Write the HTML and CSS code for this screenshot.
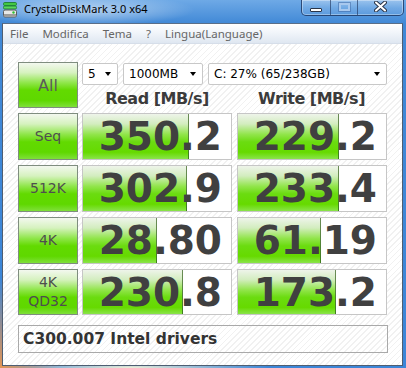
FILE: index.html
```html
<!DOCTYPE html>
<html>
<head>
<meta charset="utf-8">
<title>CrystalDiskMark 3.0 x64</title>
<link rel="stylesheet" href="styles.css">
</head>
<body>
<div class="window">
  <header class="titlebar">
    <svg class="appicon" width="15" height="16" viewBox="0 0 15 16">
      <rect x="0.5" y="0.5" width="13" height="3" rx="1.2" fill="#43c843" stroke="#23853a"/>
      <rect x="0.5" y="4" width="13" height="3" rx="1.2" fill="#5ad85a" stroke="#23853a"/>
      <rect x="0.5" y="8" width="13" height="7" rx="1.5" fill="#e8e8e8" stroke="#5c5c5c"/>
      <rect x="1" y="12" width="12" height="2.5" fill="#9c9c9c"/>
      <circle cx="10.5" cy="10.5" r="1.2" fill="#2fbf2f"/>
    </svg>
    <span class="title">CrystalDiskMark 3.0 x64</span>
    <div class="caption">
      <div class="cbtn cmin"><span class="glyph-min"></span></div>
      <div class="cbtn cmax"><span class="glyph-max"></span></div>
      <div class="cbtn cclose">
        <svg width="13" height="11" viewBox="0 0 13 11">
          <path d="M2 1.5 L11 9.5 M11 1.5 L2 9.5" stroke="#2a3548" stroke-width="4" stroke-linecap="round"/>
          <path d="M2 1.5 L11 9.5 M11 1.5 L2 9.5" stroke="#ffffff" stroke-width="2" stroke-linecap="round"/>
        </svg>
      </div>
    </div>
  </header>
  <div class="client">
    <nav class="menubar">
      <span class="mi">File</span>
      <span class="mi">Modifica</span>
      <span class="mi">Tema</span>
      <span class="mi">?</span>
      <span class="mi">Lingua(Language)</span>
    </nav>
    <main class="panel">
      <div class="board">
        <div class="tile all">All</div>
        <div class="topctl">
          <div class="selects">
            <div class="sel s-count"><span class="sel-text">5</span><i class="arrow"></i></div>
            <div class="sel s-size"><span class="sel-text">1000MB</span><i class="arrow"></i></div>
            <div class="sel s-drive"><span class="sel-text">C: 27% (65/238GB)</span><i class="arrow"></i></div>
          </div>
          <div class="heads">
            <div class="head">Read [MB/s]</div>
            <div class="head">Write [MB/s]</div>
          </div>
        </div>

        <div class="tile">Seq</div>
        <div class="val" style="--w:105px">350.2</div>
        <div class="val wr" style="--w:100px">229.2</div>

        <div class="tile">512K</div>
        <div class="val" style="--w:103px">302.9</div>
        <div class="val wr" style="--w:100px">233.4</div>

        <div class="tile">4K</div>
        <div class="val" style="--w:73px">28.80</div>
        <div class="val wr" style="--w:82px">61.19</div>

        <div class="tile two">4K<br>QD32</div>
        <div class="val" style="--w:99px">230.8</div>
        <div class="val wr" style="--w:97px">173.2</div>
      </div>
      <div class="comment">C300.007 Intel drivers</div>
    </main>
  </div>
</div>
</body>
</html>
```

FILE: styles.css
```css
* { box-sizing: border-box; margin: 0; padding: 0; }
html, body { width: 406px; height: 368px; overflow: hidden; }
body { font-family: "DejaVu Sans", sans-serif; background: #3f87d6; }

.window {
  width: 406px;
  height: 368px;
  display: flex;
  flex-direction: column;
  background:
    radial-gradient(ellipse 110px 16px at 85px 10px, rgba(255,255,255,.55), rgba(255,255,255,0)),
    radial-gradient(ellipse 60px 90px at 0 368px, rgba(245,150,70,.9), rgba(245,150,70,0)),
    radial-gradient(ellipse 140px 10px at 130px 368px, rgba(250,245,215,.95), rgba(250,245,215,0)),
    linear-gradient(#6ea9e6, #4088d6 24px, #3c86d8);
}

/* title bar */
.titlebar {
  height: 23px;
  display: flex;
  align-items: flex-start;
  flex: none;
}
.appicon { margin: 2px 0 0 3px; flex: none; }
.title {
  margin-left: 6px;
  font-family: "Noto Sans", sans-serif;
  font-size: 11px;
  line-height: 18px;
  color: #000;
}
.caption {
  margin-left: auto;
  margin-right: 2px;
  display: flex;
  height: 16px;
  border: 1px solid rgba(25,45,85,.75);
  border-top: none;
  border-radius: 0 0 5px 5px;
  overflow: hidden;
  box-shadow: inset 0 0 0 1px rgba(255,255,255,.35);
}
.cbtn {
  display: flex;
  align-items: center;
  justify-content: center;
  background: linear-gradient(rgba(255,255,255,.30), rgba(255,255,255,.12) 50%, rgba(255,255,255,.05));
}
.cbtn + .cbtn { border-left: 1px solid rgba(25,45,85,.6); }
.cmin { width: 28px; }
.cmax { width: 27px; }
.cclose { width: 46px; }
.glyph-min {
  width: 12px; height: 4px;
  margin-top: 5px;
  background: #fff;
  border: 1px solid #2a3548;
  border-radius: 1px;
}
.glyph-max {
  width: 11px; height: 8px;
  margin-top: -2px;
  border: 2px solid #a8c8ee;
  outline: 1px solid rgba(60,100,160,.5);
}
.cclose svg { margin-top: -3px; }

/* client */
.client {
  flex: 1;
  margin: 0 3px 2px 2px;
  border: 1px solid #4e5e72;
  border-top-color: #5a6e88;
  display: flex;
  flex-direction: column;
  background:
    repeating-linear-gradient(-45deg, #ffffff 0 3px, #f1f1f1 3px 4.2px);
}

.menubar {
  height: 20px;
  flex: none;
  display: flex;
  align-items: center;
  padding-left: 0;
  background: linear-gradient(#ffffff, #f1f5fa 45%, #dfe7f1);
  border-bottom: 1px solid #d6dee9;
  font-family: "Noto Sans", sans-serif;
  font-size: 11.5px;
  color: #666;
}
.mi { padding: 0 7px; }

.panel {
  padding: 18px 0 0 15px;
}

.board {
  display: grid;
  grid-template-columns: 60px 150px 151px;
  grid-template-rows: 46px 47px 47px 47px 46px;
  column-gap: 4px;
  row-gap: 5px;
}

.tile {
  border: 1px solid #7f8d7f;
  display: flex;
  align-items: center;
  justify-content: center;
  text-align: center;
  font-size: 14px;
  line-height: 19px;
  color: #4e4e4e;
  background: linear-gradient(#f3f8ef 0%, #d6f2bf 22%, #8fe64a 45%, #62da00 62%, #5fd800 85%, #7fe03a 100%);
}
.tile.all { font-size: 16px; color: #5a5a5a; }

.topctl {
  grid-column: 2 / 4;
  display: flex;
  flex-direction: column;
}
.selects {
  display: flex;
  gap: 5px;
  height: 22px;
  margin-top: 1px;
}
.sel {
  display: flex;
  align-items: center;
  background: #fff;
  border: 1px solid #c8c8c8;
  border-radius: 2px;
  font-size: 12px;
  color: #000;
  padding: 0 6px 0 5px;
}
.sel-text { flex: 1; white-space: nowrap; }
.arrow {
  width: 0; height: 0;
  border-left: 3.5px solid transparent;
  border-right: 3.5px solid transparent;
  border-top: 4px solid #000;
}
.s-count { width: 36px; }
.s-size { width: 80px; }
.s-drive { width: 179px; }

.heads {
  flex: 1;
  display: grid;
  grid-template-columns: 150px 151px;
  column-gap: 4px;
}
.head {
  display: flex;
  align-items: center;
  justify-content: center;
  padding-top: 3px;
  font-weight: bold;
  font-size: 16px;
  letter-spacing: -0.5px;
  color: #3b3b3b;
}

.val {
  border: 1px solid #c6c6c6;
  display: flex;
  align-items: center;
  justify-content: flex-end;
  padding-right: 9px;
  font-weight: bold;
  font-size: 39px;
  line-height: 1;
  color: #404040;
  background:
    linear-gradient(#6c8c58, #3d7d1c) var(--w) 0 / 1px 100% no-repeat,
    linear-gradient(#eef4ea 0%, #d3edbf 22%, #92e54c 45%, #6bdc10 62%, #66da00 85%, #8ae44a 100%) 0 0 / var(--w) 100% no-repeat,
    #fff;
}
.val.wr { margin-left: 1px; }

.comment {
  margin-top: 10px;
  width: 370px;
  height: 28px;
  border: 1px solid #a9a9a9;
  display: flex;
  align-items: center;
  padding-left: 4px;
  font-weight: bold;
  font-size: 15.5px;
  color: #333;
}
```
